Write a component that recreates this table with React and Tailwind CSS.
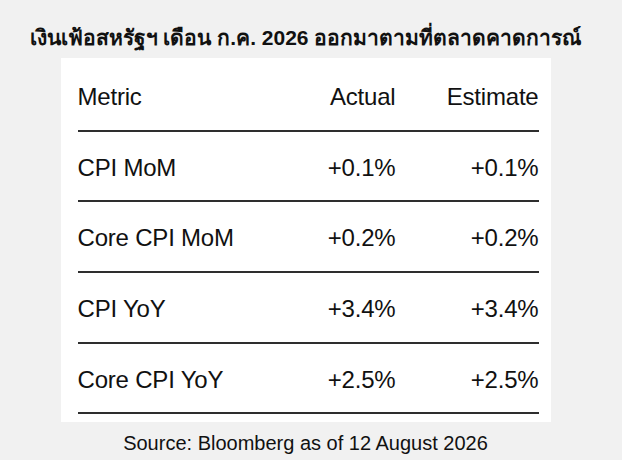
import React from 'react';

const rows = [
    { metric: 'CPI MoM', actual: '+0.1%', estimate: '+0.1%' },
    { metric: 'Core CPI MoM', actual: '+0.2%', estimate: '+0.2%' },
    { metric: 'CPI YoY', actual: '+3.4%', estimate: '+3.4%' },
    { metric: 'Core CPI YoY', actual: '+2.5%', estimate: '+2.5%' },
];

const Row = ({ cells }) => (
    <div className="grid grid-cols-[1fr_150px_143px] h-[70.7px] pt-6 leading-6 border-b-[2.5px] border-[#2e2e2e]">
        <div>{cells[0]}</div>
        <div className="text-right">{cells[1]}</div>
        <div className="text-right">{cells[2]}</div>
    </div>
);

export default function App() {
    return (
        <div className="w-[622px] h-[460px] bg-[#f1f1f1] text-[#111] font-['Liberation_Sans',Arial,sans-serif] pr-[11px] flex flex-col items-center">
            <h1 className="mt-[26px] h-[32px] text-[21px] leading-[24px] font-bold whitespace-nowrap">
                เงินเฟ้อสหรัฐฯ เดือน ก.ค. 2026 ออกมาตามที่ตลาดคาดการณ์
            </h1>
            <div className="w-[490px] bg-white pt-[3px] pb-[8px] pl-[17px] pr-[12px] text-[24px] tracking-[-0.2px]">
                <Row cells={['Metric', 'Actual', 'Estimate']} />
                {rows.map((r) => (
                    <Row key={r.metric} cells={[r.metric, r.actual, r.estimate]} />
                ))}
            </div>
            <p className="mt-[9px] text-[20px] leading-6">Source: Bloomberg as of 12 August 2026</p>
        </div>
    );
}
